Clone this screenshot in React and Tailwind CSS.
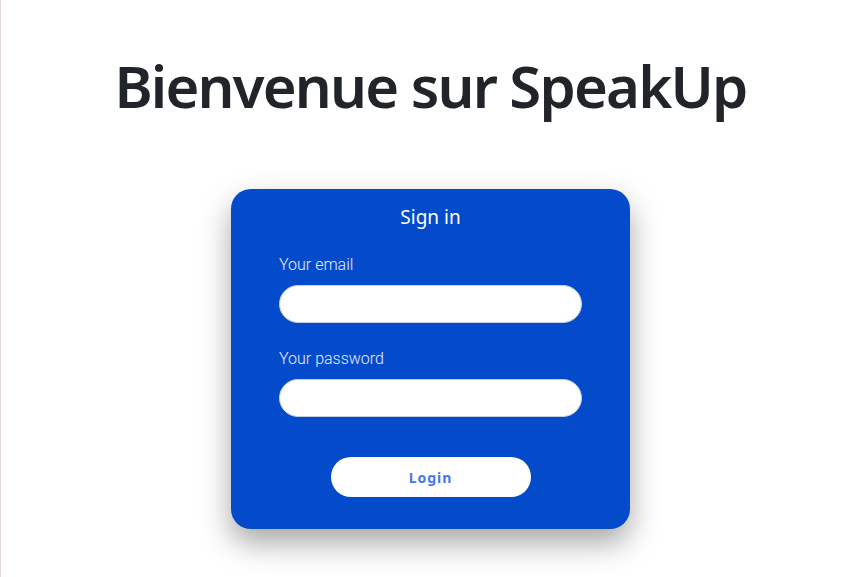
export default function App() {
  return (
    <div className="min-h-[577px] bg-white border-l border-[#e3d9d6] flex flex-col items-center">
      <h1 className="mt-[44px] font-['Noto_Sans',sans-serif] text-[58px] leading-[84px] font-semibold text-[#212529] tracking-[-1.8px]">
        Bienvenue sur SpeakUp
      </h1>

      <form
        className="mt-[61px] w-[399px] h-[340px] bg-[#044bcc] rounded-[20px] shadow-[0_14px_30px_rgba(0,0,0,0.35)] px-[48px] pt-[16px] flex flex-col"
        onSubmit={(e) => e.preventDefault()}
      >
        <h2 className="text-center font-['Noto_Sans',sans-serif] text-white text-[19px] leading-[24px]">
          Sign in
        </h2>

        <label className="mt-[26px] font-['Roboto',sans-serif] text-[16px] leading-[20px] font-light text-[#e8ecff]">
          Your email
        </label>
        <input
          type="email"
          className="mt-[10px] h-[38px] w-full rounded-full bg-white border border-[#c6cfe0] outline-none px-4"
        />

        <label className="mt-[26px] font-['Roboto',sans-serif] text-[16px] leading-[20px] font-light text-[#e8ecff]">
          Your password
        </label>
        <input
          type="password"
          className="mt-[10px] h-[38px] w-full rounded-full bg-white border border-[#c6cfe0] outline-none px-4"
        />

        <button
          type="submit"
          className="mt-[40px] self-center w-[200px] h-[40px] rounded-full bg-white font-['Noto_Sans',sans-serif] text-[#4677f2] text-[14px] font-bold tracking-[1px]"
        >
          Login
        </button>
      </form>
    </div>
  )
}
